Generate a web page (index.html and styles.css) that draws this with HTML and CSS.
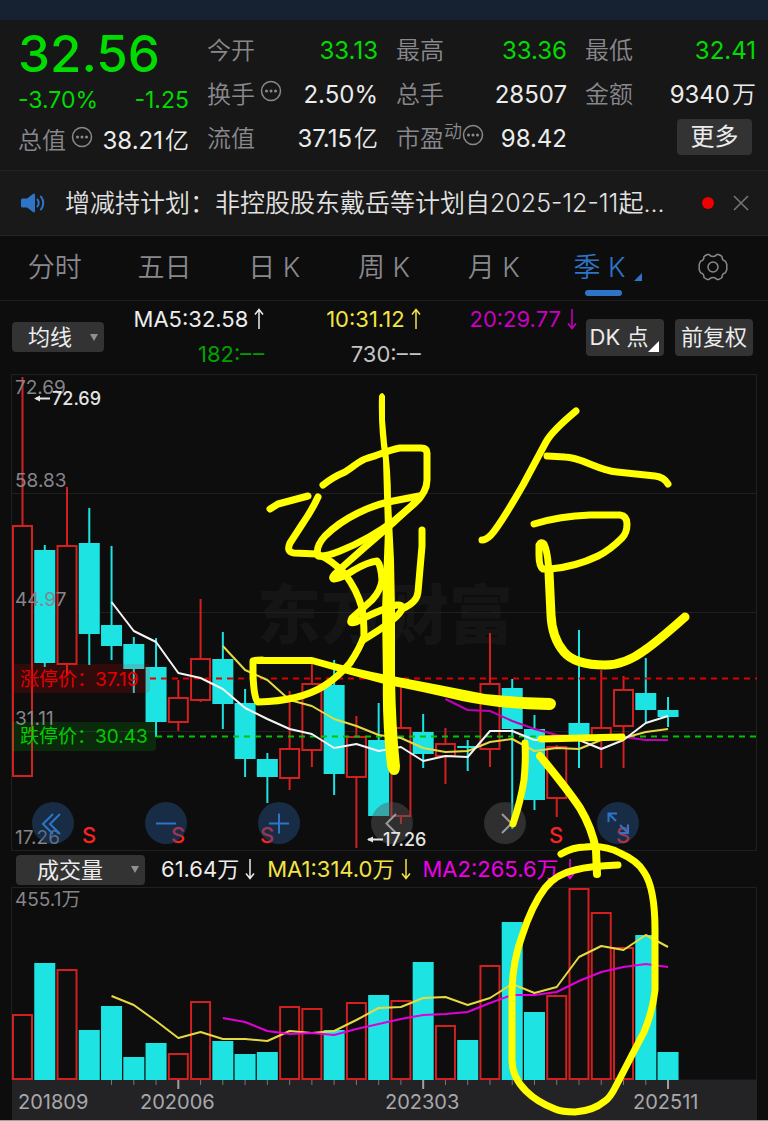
FILE: index.html
```html
<!DOCTYPE html>
<html lang="zh-CN">
<head>
<meta charset="utf-8">
<meta name="viewport" content="width=device-width, initial-scale=1">
<title>季K</title>
<link rel="stylesheet" href="styles.css">
</head>
<body>
<svg class="defs" aria-hidden="true">
  <symbol id="up" viewBox="0 0 10 22"><path d="M5 21V2M1 6.500L5 1.500 9 6.500"/></symbol>
  <symbol id="down" viewBox="0 0 10 22"><path d="M5 1V20M1 15.500L5 20.500 9 15.500"/></symbol>
  <symbol id="more" viewBox="0 0 22 22"><circle cx="11" cy="11" r="9.500"/><path class="dots" d="M6.500 11h.01M11 11h.01M15.500 11h.01"/></symbol>
</svg>
<div class="status"></div>
<section class="quote">
  <div class="col">
    <div class="price">32.56</div>
    <div class="row change down"><span>-3.70%</span><span>-1.25</span></div>
    <div class="row"><span class="label">总值<svg class="info"><use href="#more"/></svg></span><span>38.21<span class="unit">亿</span></span></div>
  </div>
  <div class="col">
    <div class="row"><span class="label">今开</span><span class="down">33.13</span></div>
    <div class="row"><span class="label">换手<svg class="info"><use href="#more"/></svg></span><span>2.50%</span></div>
    <div class="row"><span class="label">流值</span><span>37.15<span class="unit">亿</span></span></div>
  </div>
  <div class="col">
    <div class="row"><span class="label">最高</span><span class="down">33.36</span></div>
    <div class="row"><span class="label">总手</span><span>28507</span></div>
    <div class="row"><span class="label pe">市盈<sup>动</sup><svg class="info"><use href="#more"/></svg></span><span>98.42</span></div>
  </div>
  <div class="col">
    <div class="row"><span class="label">最低</span><span class="down">32.41</span></div>
    <div class="row"><span class="label">金额</span><span>9340<span class="unit">万</span></span></div>
    <div class="row end"><button class="btn more-btn">更多</button></div>
  </div>
</section>
<section class="news">
  <svg class="speaker" viewBox="0 0 24 20"><path fill="currentColor" d="M0 7q0-1.500 1.500-1.500H6L12 1q2-1.200 2 1v16q0 2.200-2 1L6 14.500H1.500Q0 14.500 0 13z"/><path class="wave" d="M16.500 6.500q2.500 3.500 0 7M20 3.500q4.500 6.500 0 13"/></svg>
  <a class="headline" href="#">增减持计划：非控股股东戴岳等计划自2025-12-11起...</a>
  <span class="dot"></span>
  <button class="close" aria-label="关闭"><svg viewBox="0 0 16 16"><path d="M1 1L15 15M15 1L1 15"/></svg></button>
</section>
<nav class="tabs">
  <button>分时</button><button>五日</button><button>日 K</button><button>周 K</button><button>月 K</button>
  <button class="active"><span>季 K</span></button>
  <button aria-label="设置"><svg class="gear" viewBox="0 0 30 28"><path d="M9.500 1.500h1.500q1.500 2 4 2t4-2h1.500q2.500 1 3.500 2 0 4 3.500 4.800l1.300 3.200v5L27.500 19.700Q24 20.500 24 24.500q-1 1-3.500 2H19q-1.500-2-4-2t-4 2H9.500q-2.500-1-3.500-2 0-4-3.500-4.800L1.200 16.500v-5L2.500 8.300Q6 7.500 6 3.500q1-1 3.500-2z"/><circle cx="15" cy="14" r="5"/></svg></button>
</nav>
<section class="indicators">
  <button class="btn select-ma">均线<span class="caret"></span></button>
  <div class="ma-grid">
    <span>MA5:32.58<svg class="arrow"><use href="#up"/></svg></span>
    <span class="yellow">10:31.12<svg class="arrow"><use href="#up"/></svg></span>
    <span class="purple">20:29.77<svg class="arrow"><use href="#down"/></svg></span>
    <span class="green">182:–&#8202;–</span>
    <span class="silver">730:–&#8202;–</span>
  </div>
  <button class="btn tool dk">DK 点</button>
  <button class="btn tool">前复权</button>
</section>
<main class="charts">
  <div class="price-chart">
    <svg class="plot" viewBox="0 373 768 479">
      <text class="watermark" x="257" y="638">东方财富</text>
      <path class="grid" d="M11.500 374.500H756.500V850.500H11.500zM12 493.500H756M12 612.500H756M12 731.500H756"/>
      <g id="candles"></g>
      <path class="limit-up" d="M150 678.500H757"/>
      <path class="limit-down" d="M156 736.500H757"/>
      <g id="averages"></g>
      <g class="scale"><text x="15" y="394">72.69</text><text x="15" y="487">58.83</text><text x="15" y="606">44.97</text><text x="15" y="725">31.11</text><text x="15" y="844">17.26</text></g>
      <path class="tag-up" d="M12 664H146q4 0 4 4V689q0 4-4 4H12z"/><text class="tag-up-text" x="20" y="686">涨停价：</text><text class="tag-up-text" x="95" y="686">37.19</text>
      <path class="tag-down" d="M12 722H152q4 0 4 4V747q0 4-4 4H12z"/><text class="tag-down-text" x="20" y="743">跌停价：</text><text class="tag-down-text" x="95" y="743">30.43</text>
      <g class="sell"><text x="82" y="843">S</text><text x="171" y="843">S</text><text x="260" y="843">S</text><text x="549" y="843">S</text><text x="616" y="843">S</text></g>
    </svg>
    <div class="controls">
      <button aria-label="最早"><svg viewBox="0 0 42 42"><path d="M21 12L11 22 21 32M28 12L18 22 28 32"/></svg></button>
      <button aria-label="缩小"><svg viewBox="0 0 42 42"><path d="M11 21.500H31"/></svg></button>
      <button aria-label="放大"><svg viewBox="0 0 42 42"><path d="M11 21.500H31M21 11.500V31.500"/></svg></button>
      <button class="gray" aria-label="左移"><svg viewBox="0 0 42 42"><path d="M25 12L15.500 21.500 25 31"/></svg></button>
      <button class="gray" aria-label="右移"><svg viewBox="0 0 42 42"><path d="M18 12L27.500 21.500 18 31"/></svg></button>
      <button aria-label="全屏"><svg viewBox="0 0 42 42"><path d="M11.500 20V11.500H20M12 12L19 19M31 22.500V31H22.500M23 23L31 31"/></svg></button>
    </div>
    <svg class="plot marks" viewBox="0 373 768 479">
      <path class="pointer" d="M36 398.500H50M368 839.500H383"/><path class="head" d="M34 398.500l6-3v6zM367 839.500l6-3v6z"/>
      <text class="extreme" x="52" y="405">72.69</text><text class="extreme" x="383" y="846">17.26</text>
    </svg>
  </div>
  <div class="volume-bar">
    <button class="btn select-vol">成交量<span class="caret"></span></button>
    <span>61.64万<svg class="arrow"><use href="#down"/></svg></span>
    <span class="yellow">MA1:314.0万<svg class="arrow"><use href="#down"/></svg></span>
    <span class="magenta">MA2:265.6万<svg class="arrow"><use href="#down"/></svg></span>
  </div>
  <svg class="plot" viewBox="0 887 768 234">
    <path class="grid" d="M11.500 887.500H756.500V1080H11.500z"/>
    <rect class="axis" x="12" y="1080" width="745" height="40"/>
    <rect class="edge" x="0" y="1120" width="768" height="1"/>
    <g id="volumes"></g>
    <text class="scale" x="15" y="906">455.1万</text>
    <g class="dates"><text x="18" y="1109">201809</text><text x="140" y="1109">202006</text><text x="385" y="1109">202303</text><text x="633" y="1109">202511</text></g>
  </svg>
  <svg class="ink" viewBox="0 373 768 748">
    <path class="fill" d="M379 396Q382 390 385 396L385 420 387 443Q391 470 391 500L394 560 395 610V680Q396 730 400 766 400 775 394 775 389 775 387 766 382 720 383 680L382 610 385 530 383 460Q378 430 379 396z"/>
    <path d="M323 485Q333 477 345 472C355 466 358 461 368 458C380 455 388 450 400 448H421Q427 448 427 453V480Q427 492 415 503L395 520C375 535 355 545 340 551Q325 557 318 556 315 547 325 536C345 516 372 506 388 502L419 496"/>
    <path d="M419 499L395 521 365 547 338 571Q330 578 334 579 342 578 354 570 368 562 377 561 381 565 382 580 381 590 372 600L352 618Q348 625 356 622C370 615 383 608 397 605Q404 604 401 611 395 621 363 640"/>
    <path d="M270 509L278 504 308 496"/>
    <path d="M318 497Q312 510 303 523L290 543Q286 552 294 553L317 554Q332 560 345 574 357 590 362 608 364 620 364 636 360 648 350 663 338 677 324 686 300 701 258 702 254 700 253 675V661Q255 660 262 660"/>
    <path d="M422 530L422 546 418 592Q417 602 404 608"/>
    <path class="fill" d="M258 657H312Q350 668 392 676 440 685 485 694L520 697 550 698Q556 699 556 704 555 710 549 710 500 709 462 701 420 691 388 685 350 675 312 664H257z"/>
    <path d="M576 411Q552 431 546 442L523 485Q500 525 491 535 486 540 482 540"/>
    <path d="M547 456L565 457C581 457 597 470 617 472L655 476Q664 477 668 484"/>
    <path d="M534 524Q560 516 590 515H620Q627 516 627 524 627 533 622 538 610 550 598 556 575 567 550 569H543Q539 567 539 555V545Q541 541 544 544 548 552 549 575"/>
    <path class="wide" d="M549 572L551 615Q552 638 564 652 575 665 605 665 625 665 645 650 658 641 685 617"/>
    <path d="M541 739L622 737"/>
    <path d="M525 743Q526 760 524 780 521 800 513 824"/>
    <path class="medium" d="M540 756Q568 790 580 808 592 828 596 850L597 874"/>
    <path d="M561 854Q573 847 585 847 605 845 620 853 638 861 644 872 655 888 655 930V990Q653 1010 644 1032L632 1055 616 1086Q610 1098 605 1101 593 1111 575 1112 562 1112 555 1109 537 1102 526 1091 512 1077 512 1060V990Q513 960 522 936 532 905 545 888 556 874 575 870 590 866 618 865"/>
  </svg>
</main>
<script src="chart.js"></script>
</body>
</html>
```
FILE: styles.css
```css
* { box-sizing: border-box; }
body {
  margin: 0;
  background: #0d0d0d;
  color: #ececec;
  font-family: Inter, "Noto Sans CJK SC", sans-serif;
  font-weight: 400;
  line-height: 1.2;
}
button {
  margin: 0;
  padding: 0;
  border: 0;
  background: none;
  color: inherit;
  font: inherit;
  cursor: pointer;
}
svg { fill: none; stroke: currentColor; }
.defs { position: absolute; width: 0; height: 0; }
.status { height: 20px; background: #162232; }

.quote {
  display: grid;
  grid-template-columns: repeat(4, 1fr);
  gap: 18px;
  padding: 9px 12px 9px 18px;
  background: #171717;
  border-bottom: 1px solid #232323;
  font-size: 24px;
  white-space: nowrap;
}
.col { display: flex; flex-direction: column; }
.row {
  display: flex;
  align-items: center;
  justify-content: space-between;
  height: 44px;
}
.end { justify-content: flex-end; }
.price {
  height: 48px;
  line-height: 50px;
  font-size: 51px;
  font-weight: 500;
  color: #00dc00;
}
.change { height: 40px; margin-top: 4px; font-size: 23px; }
.change + .row { height: 40px; }
.down { color: #00dc00; }
.label {
  display: flex;
  align-items: center;
  color: #88888d;
  font-weight: 350;
}
.label sup {
  margin-top: -14px;
  font-size: 18px;
  line-height: 20px;
  vertical-align: baseline;
}
.info { width: 22px; height: 22px; margin: -8px 0 0 5px; stroke-width: 1.5; }
.pe .info { margin-left: 0; }
.dots { stroke-width: 3; stroke-linecap: round; }
.unit { margin-left: 2px; font-weight: 350; }
.btn {
  background: #333334;
  border-radius: 4px;
  font-size: 22px;
  line-height: 30px;
  white-space: nowrap;
}
.more-btn { width: 75px; height: 36px; margin: -4px 4px 0 0; font-size: 24px; }

.news {
  display: flex;
  align-items: center;
  height: 65px;
  padding: 0 19px 0 21px;
  background: #191919;
  border-bottom: 1px solid #262626;
}
.speaker { width: 24px; height: 20px; color: #2e75c8; stroke: none; }
.wave { stroke: currentColor; stroke-width: 2; stroke-linecap: round; }
.headline {
  flex: 1;
  margin-left: 20px;
  overflow: hidden;
  color: #e2e2e2;
  font-size: 25px;
  font-weight: 350;
  text-decoration: none;
  white-space: nowrap;
}
.dot { width: 12px; height: 12px; border-radius: 50%; background: #f00000; }
.close { display: flex; margin-left: 19px; color: #77777a; }
.close svg { width: 16px; height: 16px; stroke-width: 1.5; }

.tabs {
  display: grid;
  grid-template-columns: repeat(7, 1fr);
  height: 65px;
  border-bottom: 1px solid #202020;
  color: #88888d;
  font-size: 27px;
  font-weight: 350;
}
.tabs button { position: relative; white-space: nowrap; }
.tabs .active { padding-right: 8px; color: #2e75c8; }
.active::before {
  content: "";
  position: absolute;
  bottom: 4px;
  left: calc(50% - 18px);
  width: 37px;
  height: 6px;
  border-radius: 3px;
  background: #2e75c8;
}
.active::after {
  content: "";
  position: absolute;
  right: 16px;
  bottom: 19px;
  border-left: 8px solid transparent;
  border-bottom: 8px solid #2e75c8;
}
.gear { display: block; width: 30px; height: 28px; margin: 0 auto 2px; stroke-width: 1.5; }

.indicators {
  display: flex;
  align-items: center;
  height: 72px;
  padding: 0 15px 0 12px;
}
.select-ma, .select-vol {
  display: flex;
  align-items: center;
  justify-content: flex-end;
  height: 30px;
}
.select-ma { width: 92px; gap: 18px; padding-right: 6px; }
.select-vol { width: 129px; gap: 28px; padding-right: 6px; }
.caret {
  border: 4px solid transparent;
  border-top: 7px solid #919195;
  border-bottom: 0;
}
.ma-grid {
  display: grid;
  flex: 1;
  grid-template-columns: repeat(3, 1fr);
  margin: 0 9px 0 4px;
  font-size: 22px;
  line-height: 35px;
  text-align: right;
  white-space: nowrap;
}
.arrow { width: 10px; height: 22px; margin-left: 6px; stroke-width: 1.5; vertical-align: -3px; }
.yellow { color: #f3e444; }
.purple { color: #c800c0; }
.magenta { color: #f000e8; }
.green { color: #00a000; }
.silver { color: #c4c4c4; }
.tool { position: relative; width: 78px; height: 37px; }
.tool + .tool { margin-left: 11px; }
.dk { padding-right: 12px; }
.dk::after {
  content: "";
  position: absolute;
  right: 5px;
  bottom: 4px;
  border-left: 11px solid transparent;
  border-bottom: 11px solid #fff;
}

.charts { position: relative; }
.price-chart { position: relative; }
.plot { display: block; width: 100%; stroke: none; }
.marks { position: absolute; inset: 0; pointer-events: none; }
.ink {
  position: absolute;
  top: 0;
  left: 0;
  width: 100%;
  stroke: #ff0;
  stroke-width: 7;
  stroke-linecap: round;
  stroke-linejoin: round;
  pointer-events: none;
}
.ink .fill { fill: #ff0; stroke: none; }
.ink .wide { stroke-width: 9; }
.ink .medium { stroke-width: 8; }
.grid { stroke: #202021; }
.watermark { fill: #151516; font-size: 64px; font-weight: 900; }
.scale { fill: #85858a; font-size: 19px; }
.extreme { fill: #e4e4e4; font-size: 18px; font-weight: 500; }
.pointer { stroke: #e4e4e4; stroke-width: 2; }
.head { fill: #e4e4e4; }
.sell { fill: #f82424; font-size: 22px; font-weight: 500; }
.tag-up { fill: #ff0000; fill-opacity: 0.14; }
.tag-down { fill: #00ff00; fill-opacity: 0.12; }
.tag-up-text { fill: #e40000; font-size: 19px; }
.tag-down-text { fill: #00cc00; font-size: 19px; }
.limit-up { stroke: #e00000; stroke-width: 2; stroke-dasharray: 6 5; }
.limit-down { stroke: #00c400; stroke-width: 2; stroke-dasharray: 6 5; }
.rise { fill: #0d0d0d; stroke: #d22020; stroke-width: 2; }
.rise-wick { stroke: #d22020; stroke-width: 2; }
.fall { fill: #1de3e3; }
.fall-wick { stroke: #1de3e3; stroke-width: 2; }
.line { stroke-width: 2; stroke-linejoin: round; }
.ma5 { stroke: #f4f4f4; }
.ma10 { stroke: #e6da43; }
.ma20 { stroke: #c000b8; }
.vma2 { stroke: #e000d8; }
.axis { fill: #232326; }
.edge { fill: #a2a2a2; }
.tick { stroke: #77777a; stroke-width: 1; }
.tick-major { stroke: #a0a0a4; stroke-width: 2; }
.dates { fill: #a8a8ab; font-size: 20px; }

.controls {
  position: absolute;
  right: 129px;
  bottom: 8px;
  left: 32px;
  display: flex;
  justify-content: space-between;
}
.controls button {
  width: 42px;
  height: 42px;
  border-radius: 50%;
  background: rgba(40, 82, 138, 0.45);
  color: #2e75c8;
}
.controls .gray { background: rgba(88, 88, 90, 0.45); color: #9a9a9c; }
.controls svg { display: block; stroke-width: 2; }
.volume-bar {
  display: flex;
  align-items: center;
  gap: 12px;
  height: 35px;
  padding-left: 16px;
  font-size: 22px;
  white-space: nowrap;
}
.select-vol { margin-right: 4px; }
```
FILE: chart.js
```js
const STEP = 22.26;
const FIRST = 22.5;
const BASE = 1080;
const center = i => FIRST + i * STEP;

// direction, high, body top, body bottom, low
const candles = [
  ["r", 377, 526, 776, 776], ["f", 545, 550, 663, 667], ["r", 487, 546, 664, 676],
  ["f", 508, 543, 634, 665], ["f", 546, 625, 646, 660], ["f", 637, 644, 669, 693],
  ["f", 638, 667, 722, 737], ["r", 680, 698, 722, 731], ["r", 599, 659, 700, 702],
  ["f", 632, 659, 704, 729], ["f", 689, 703, 759, 777], ["f", 753, 759, 777, 803],
  ["r", 691, 749, 778, 790], ["r", 664, 684, 750, 767], ["f", 660, 685, 774, 795],
  ["r", 716, 737, 777, 848], ["f", 703, 740, 816, 816], ["r", 685, 728, 816, 824],
  ["f", 714, 732, 754, 768], ["r", 728, 744, 756, 784], ["f", 740, 746, 748, 771],
  ["r", 633, 684, 749, 767], ["f", 679, 688, 729, 829], ["f", 715, 729, 800, 810],
  ["r", 745, 747, 798, 817], ["f", 630, 723, 737, 768], ["r", 670, 728, 737, 768],
  ["r", 676, 690, 726, 768], ["f", 658, 693, 710, 722], ["f", 697, 710, 717, 727]
];
const volumes = [
  ["r", 1014], ["f", 963], ["r", 969], ["f", 1030], ["f", 1006], ["f", 1057],
  ["f", 1043], ["r", 1053], ["r", 1001], ["f", 1041], ["f", 1054], ["f", 1052],
  ["r", 1006], ["r", 1008], ["f", 1030], ["r", 1002], ["f", 995], ["r", 1000],
  ["f", 962], ["r", 1025], ["f", 1040], ["r", 965], ["f", 922], ["f", 1012],
  ["r", 995], ["r", 888], ["r", 912], ["r", 947], ["f", 935], ["f", 1052]
];

function box(kind, x, top, bottom) {
  return kind === "r"
    ? `<rect class="rise" x="${x - 9.5}" y="${top}" width="19" height="${bottom - top}"/>`
    : `<rect class="fall" x="${x - 10.5}" y="${top}" width="21" height="${bottom - top}"/>`;
}
function wick(kind, x, from, to) {
  return `<path class="${kind === "r" ? "rise" : "fall"}-wick" d="M${x} ${from}V${to}"/>`;
}
function line(name, start, values) {
  const points = values.map((y, i) => `${center(start + i)},${y}`).join(" ");
  return `<polyline class="line ${name}" points="${points}"/>`;
}

document.getElementById("candles").innerHTML = candles.map(([kind, high, top, bottom, low], i) => {
  const x = center(i);
  return wick(kind, x, high, low) + box(kind, x, top, bottom);
}).join("");

document.getElementById("averages").innerHTML =
  line("ma20", 19, [699, 710, 711, 721, 729, 735, 737, 737, 737, 740, 740]) +
  line("ma10", 9, [646, 670, 680, 700, 706, 719, 726, 735, 738, 748, 752, 751, 742, 739, 751, 748, 749, 740, 738, 732, 729]) +
  line("ma5", 4, [602, 631, 642, 673, 678, 689, 708, 719, 729, 734, 748, 744, 751, 747, 761, 756, 757, 731, 731, 740, 740, 740, 749, 740, 723, 716]);

const ticks = volumes.map((_, i) => {
  if (i < 4) return "";
  const major = [7, 18, 29].includes(i);
  return `<path class="${major ? "tick-major" : "tick"}" d="M${center(i)} 1080v${major ? 9 : 5}"/>`;
}).join("");

document.getElementById("volumes").innerHTML =
  volumes.map(([kind, top], i) => box(kind, center(i), kind === "r" ? top + 1 : top, kind === "r" ? BASE - 1 : BASE)).join("") +
  line("ma10", 4, [996, 1005, 1021, 1038, 1032, 1039, 1039, 1041, 1031, 1033, 1031, 1020, 1008, 1007, 998, 997, 1005, 998, 984, 993, 987, 957, 946, 950, 935, 947]) +
  line("vma2", 9, [1018, 1022, 1031, 1034, 1033, 1035, 1029, 1024, 1019, 1015, 1014, 1012, 1003, 995, 995, 992, 981, 972, 967, 964, 967]) +
  ticks;
```
